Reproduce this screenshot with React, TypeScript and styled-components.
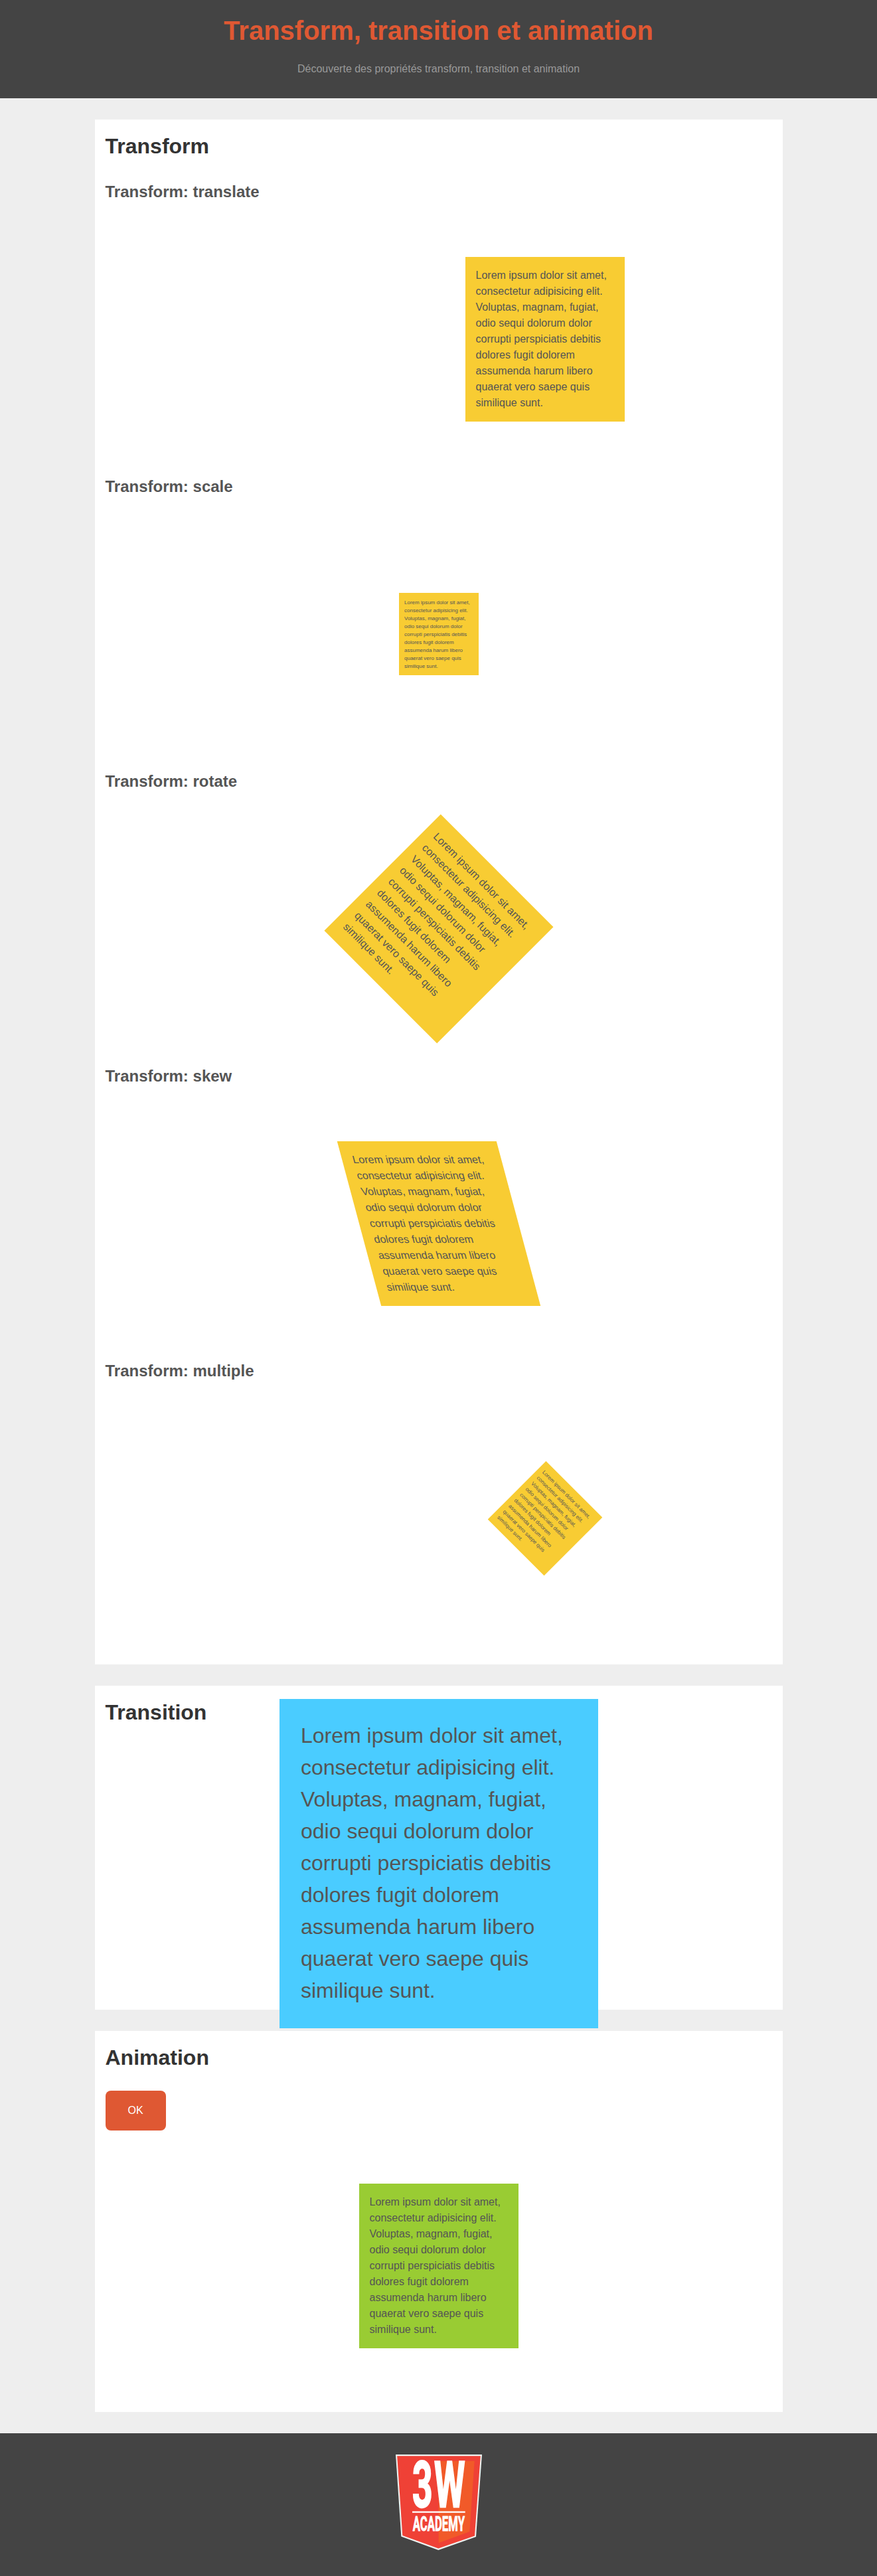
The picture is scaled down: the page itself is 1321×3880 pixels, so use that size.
import React from 'react';
import styled, { createGlobalStyle } from 'styled-components';

const GlobalStyle = createGlobalStyle`
  * { box-sizing: border-box; }
  body {
    margin: 0;
    background: #eee;
    color: #555;
    font: 16px/24px "Liberation Sans", Arial, Helvetica, sans-serif;
  }
`;

const Header = styled.header`
  padding: 16px 0 32px;
  background: #444;
  text-align: center;
`;

const PageTitle = styled.h1`
  margin: 0 0 16px;
  color: #df5833;
  font-size: 40px;
  line-height: 60px;
`;

const Subtitle = styled.p`
  margin: 0;
  color: #999;
`;

const Main = styled.main`
  display: flex;
  flex-direction: column;
  align-items: center;
  gap: 32px;
  padding: 32px 0;
`;

const Panel = styled.section`
  width: 1036px;
  padding: 16px;
  background: #fff;
`;

const PanelTitle = styled.h2<{ $space?: number }>`
  margin: 0 0 ${({ $space = 0 }) => $space}px;
  color: #333;
  font-size: 32px;
  line-height: 48px;
`;

const ExampleTitle = styled.h3`
  margin: 0;
  font-size: 24px;
  line-height: 36px;
`;

const Box = styled.p<{ $color: string; $transform?: string }>`
  width: 240px;
  height: 248px;
  margin: 80px auto;
  padding: 16px;
  background: ${({ $color }) => $color};
  transform: ${({ $transform = 'none' }) => $transform};
`;

const Button = styled.button`
  display: block;
  width: 91px;
  height: 60px;
  padding: 0;
  border: 0;
  border-radius: 8px;
  background: #df5833;
  color: #fff;
  font: inherit;
`;

const Footer = styled.footer`
  display: flex;
  justify-content: center;
  height: 215px;
  padding-top: 32px;
  background: #444;
`;

const Logo = styled.svg`
  display: block;
  width: 130px;
  height: 144px;
  overflow: visible;
  fill: #fff;
  font-family: Roboto, sans-serif;
`;

const Glyphs = styled.text<{ $stroke: number }>`
  font-weight: 700;
  stroke: #fff;
  stroke-width: ${({ $stroke }) => $stroke}px;
`;

const LOREM =
  'Lorem ipsum dolor sit amet, consectetur adipisicing elit. Voluptas, magnam, fugiat, odio sequi dolorum dolor corrupti perspiciatis debitis dolores fugit dolorem assumenda harum libero quaerat vero saepe quis similique sunt.';

const examples = [
  { name: 'translate', transform: 'translateX(160px)' },
  { name: 'scale', transform: 'scale(.5)' },
  { name: 'rotate', transform: 'rotate(45deg)' },
  { name: 'skew', transform: 'skewX(15deg)' },
  { name: 'multiple', transform: 'translateX(160px) scale(.5) rotate(45deg)' },
];

function AcademyLogo() {
  return (
    <Logo viewBox="0 0 130 144" role="img" aria-label="3W Academy">
      <polygon points="0,0 130,0 121,124 64.3,144 8.3,123.5" fill="#edf3f1" />
      <polygon points="2.2,2.2 127.8,2.2 119,122.4 64.3,141.6 10.3,122" fill="#ef4136" />
      <polygon points="64.7,9.7 118.7,9.7 111.3,116.3 64.7,133.2" fill="#f15a29" />
      <Glyphs $stroke={2.5} x="24.9" y="78.8" fontSize="95.5" textLength="30.6" lengthAdjust="spacingAndGlyphs">3</Glyphs>
      <Glyphs $stroke={2.5} x="58.1" y="79" fontSize="96" textLength="46.4" lengthAdjust="spacingAndGlyphs">W</Glyphs>
      <rect x="25" y="85.5" width="79.7" height="2.3" />
      <Glyphs $stroke={0.9} x="25.8" y="114.8" fontSize="31.4" textLength="78.2" lengthAdjust="spacingAndGlyphs">ACADEMY</Glyphs>
    </Logo>
  );
}

export default function App() {
  return (
    <>
      <GlobalStyle />
      <Header>
        <PageTitle>Transform, transition et animation</PageTitle>
        <Subtitle>Découverte des propriétés transform, transition et animation</Subtitle>
      </Header>
      <Main>
        <Panel>
          <PanelTitle $space={27}>Transform</PanelTitle>
          {examples.map(({ name, transform }) => (
            <React.Fragment key={name}>
              <ExampleTitle>Transform: {name}</ExampleTitle>
              <Box $color="#f8cc33" $transform={transform}>{LOREM}</Box>
            </React.Fragment>
          ))}
        </Panel>
        <Panel>
          <PanelTitle>Transition</PanelTitle>
          <Box $color="#4accff" $transform="scale(2)">{LOREM}</Box>
        </Panel>
        <Panel>
          <PanelTitle $space={26}>Animation</PanelTitle>
          <Button type="button">OK</Button>
          <Box $color="#9c3">{LOREM}</Box>
        </Panel>
      </Main>
      <Footer>
        <AcademyLogo />
      </Footer>
    </>
  );
}
